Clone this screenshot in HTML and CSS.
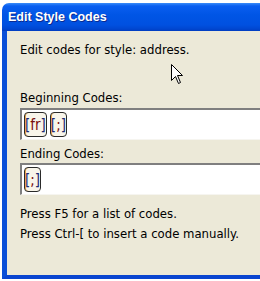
FILE: index.html
```html
<!DOCTYPE html>
<html lang="en">
<head>
    <meta charset="UTF-8">
    <title>Edit Style Codes</title>
    <link rel="stylesheet" href="styles.css">
</head>
<body>
    <div class="window">
        <div class="titlebar">Edit Style Codes</div>
        <div class="frame">
            <p class="intro">Edit codes for style: address.</p>

            <label class="label">Beginning Codes:</label>
            <div class="codebox">
                <span class="chip"><b>[</b><i>fr</i><b>]</b></span>
                <span class="chip"><b>[</b><i>;</i><b>]</b></span>
            </div>

            <label class="label">Ending Codes:</label>
            <div class="codebox">
                <span class="chip"><b>[</b><i>;</i><b>]</b></span>
            </div>

            <p class="hint first">Press F5 for a list of codes.</p>
            <p class="hint">Press Ctrl-[ to insert a code manually.</p>
        </div>
    </div>

    <!-- mouse pointer left in the shot -->
    <svg class="cursor" width="13" height="21" viewBox="0 0 13 21">
        <path d="M0.5 0.5 L0.5 16.5 L4.5 12.5 L7.5 19.5 L9.5 18.5 L6.5 11.5 L11.5 11.5 Z" fill="#fff" stroke="#000" stroke-width="1"/>
    </svg>
</body>
</html>
```

FILE: styles.css
```css
html, body {
    margin: 0;
    height: 281px;
    overflow: hidden;
    background-color: #fff;
}

body {
    font-family: 'DejaVu Sans Condensed', 'DejaVu Sans', sans-serif;
    font-size: 13px;
    color: #000;
}

.window {
    margin: 3px 0 0 2px;
    width: 320px;
    display: flex;
    flex-direction: column;
}

.titlebar {
    height: 28px;
    line-height: 29px;
    padding-left: 6px;
    border-radius: 7px 7px 0 0;
    background: linear-gradient(to bottom, #3a8cf8 0px, #0a5ef0 3px, #0055e5 12px, #0050e0 22px, #0046d0 26px, #003cc0 28px);
    color: #fff;
    font-family: 'Liberation Sans', Arial, sans-serif;
    font-weight: bold;
    font-size: 12.5px;
    text-shadow: 1px 1px 0 #0a2a90;
}

.frame {
    height: 244px;
    background-color: #ece9d8;
    border-left: 5px solid #0a4fd8;
    border-bottom: 4px solid #0a45d0;
    padding: 0 0 0 13px;
    display: flex;
    flex-direction: column;
}

.intro {
    margin: 11px 0 0 0;
    line-height: 16px;
}

.label {
    margin-top: 32px;
    line-height: 16px;
}

.label + .codebox {
    margin-top: 2px;
}

.codebox {
    height: 29px;
    background-color: #fff;
    border-top: 2px solid #7f7f7f;
    border-left: 2px solid #7f7f7f;
    border-bottom: 1px solid #f6f5f0;
    display: flex;
    align-items: center;
    gap: 3px;
    padding-left: 2px;
}

.codebox + .label {
    margin-top: 6px;
}

.label + .codebox + .label + .codebox {
    margin-top: 1px;
}

.chip {
    height: 23px;
    padding: 0;
    border: 1px solid #2a2a2a;
    border-radius: 4px;
    background-color: #f8f5ea;
    box-shadow: inset 1px 0 0 #e9a84a;
    display: flex;
    align-items: center;
    font-size: 15px;
}

.chip b {
    font-weight: normal;
    color: #1c2a70;
}

.chip i {
    font-style: normal;
    color: #7a0f0f;
}

.hint {
    margin: 0;
    line-height: 20px;
}

.hint.first {
    margin-top: 9px;
}

.cursor {
    position: absolute;
    left: 171px;
    top: 64px;
}
```
